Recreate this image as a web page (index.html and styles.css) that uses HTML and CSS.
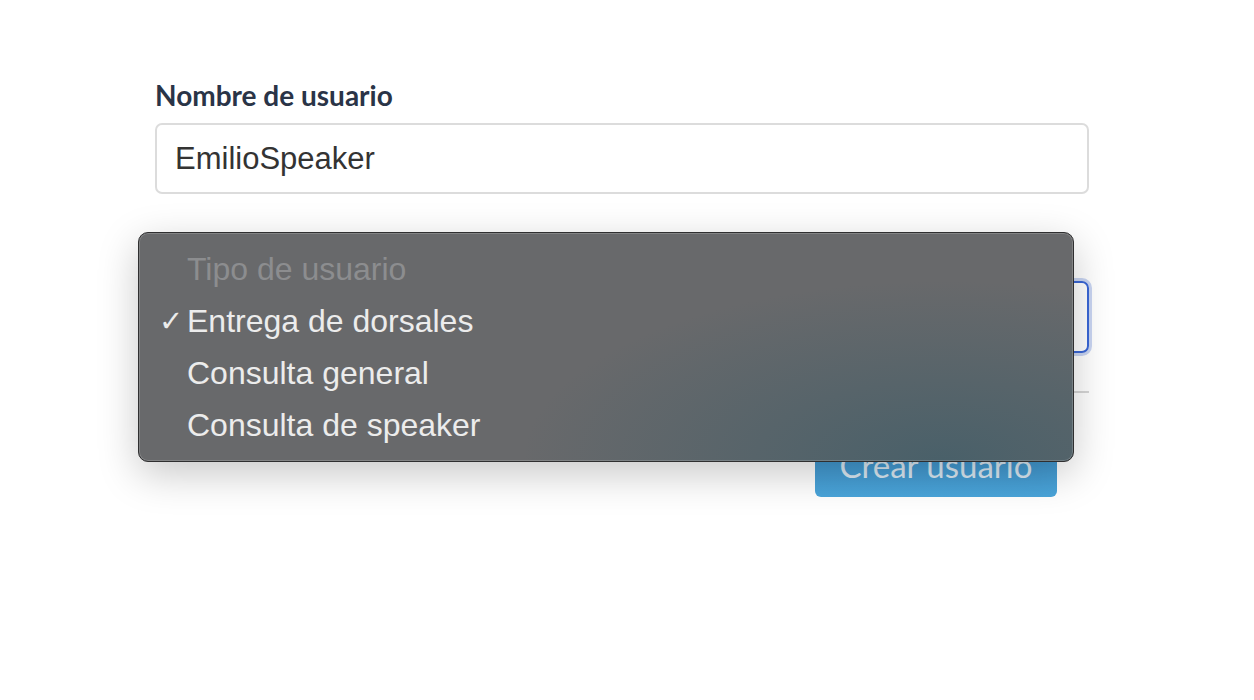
FILE: index.html
```html
<!DOCTYPE html>
<html lang="es">
<head>
    <meta charset="UTF-8">
    <title>Crear usuario</title>
    <link rel="stylesheet" href="styles.css">
</head>
<body>
    <form class="user-form">
        <div class="field">
            <label class="field-label" for="username">Nombre de usuario</label>
            <input class="text-input" id="username" type="text" value="EmilioSpeaker">
        </div>

        <div class="field field-select">
            <label class="field-label" for="usertype">Tipo de usuario</label>
            <div class="select-box" id="usertype"></div>

            <div class="select-menu">
                <div class="option disabled">Tipo de usuario</div>
                <div class="option checked">Entrega de dorsales</div>
                <div class="option">Consulta general</div>
                <div class="option">Consulta de speaker</div>
            </div>
        </div>

        <div class="form-footer">
            <button class="submit-btn" type="button">Crear usuario</button>
        </div>
    </form>
</body>
</html>
```

FILE: styles.css
```css
html, body {
    min-height: 100%;
}
body {
    margin: 0;
    background: #ffffff;
    font-family: "Liberation Sans", Arial, sans-serif;
}
.user-form {
    display: flex;
    flex-direction: column;
    width: 934px;
    margin-left: 155px;
    padding: 80px 0 200px;
}
.field {
    position: relative;
    display: flex;
    flex-direction: column;
    gap: 12px;
    margin-bottom: 44px;
}
.field-select {
    margin-bottom: 38px;
}
.field-label {
    font-family: Lato, sans-serif;
    font-weight: 700;
    font-size: 28px;
    line-height: 31px;
    color: #2a3447;
}
.text-input {
    box-sizing: border-box;
    height: 71px;
    border: 2px solid #dcdcdc;
    border-radius: 7px;
    padding: 0 18px;
    font-family: "Liberation Sans", Arial, sans-serif;
    font-size: 31px;
    color: #333333;
    outline: none;
}
.select-box {
    box-sizing: border-box;
    height: 72px;
    border: 2px solid #3a67d6;
    border-radius: 7px;
    box-shadow: 0 0 0 3px #c9d5f2;
}
.select-menu {
    position: absolute;
    z-index: 2;
    left: -17px;
    top: -6px;
    width: 936px;
    box-sizing: border-box;
    padding: 10px 0;
    border: 1px solid #2f2f30;
    border-radius: 10px;
    background:
        radial-gradient(ellipse 420px 180px at 86% 100%, rgba(70, 95, 105, 0.9), rgba(70, 95, 105, 0) 100%),
        #68696b;
    box-shadow: inset 0 0 0 1px rgba(255, 255, 255, 0.18), 0 12px 40px rgba(0, 0, 0, 0.22);
    font-family: "Liberation Sans", Arial, sans-serif;
    font-size: 32px;
    color: #ececec;
}
.option {
    position: relative;
    height: 52px;
    line-height: 52px;
    padding-left: 48px;
}
.option.disabled {
    color: #8c8d8f;
}
.option.checked::before {
    content: "\2713";
    position: absolute;
    left: 20px;
    font-size: 29px;
}
.form-footer {
    border-top: 2px solid #d6d6d6;
    padding: 40px 32px 0 0;
    display: flex;
    justify-content: flex-end;
}
.submit-btn {
    width: 242px;
    height: 64px;
    border: none;
    border-radius: 6px;
    background: linear-gradient(#3d8fc9, #4aa5da);
    color: #dbe9f3;
    font-family: Lato, sans-serif;
    font-size: 33px;
}
```
